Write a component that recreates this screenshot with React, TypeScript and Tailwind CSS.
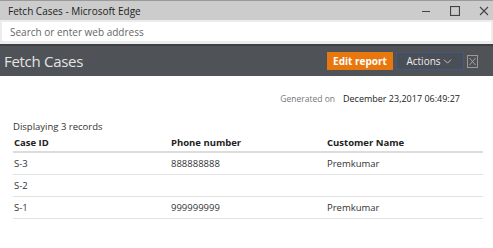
import { ChevronDown } from "lucide-react";

type CaseRow = { id: string; phone: string; name: string };

const rows: CaseRow[] = [
  { id: "S-3", phone: "888888888", name: "Premkumar" },
  { id: "S-2", phone: "", name: "" },
  { id: "S-1", phone: "999999999", name: "Premkumar" },
];

function App() {
  return (
    <div className="w-[493px] h-[248px] overflow-hidden bg-white font-['Open_Sans',sans-serif]">
      {/* window title bar */}
      <div className="h-[20px] bg-[#cccccc] border-t border-[#9a9a9a] flex items-center justify-between pl-[8px] pr-[4px]">
        <span className="text-[10px] text-[#222] leading-none">Fetch Cases - Microsoft Edge</span>
        <div className="flex items-center gap-[19px] text-[#333]">
          <svg width="10" height="10" viewBox="0 0 10 10"><path d="M1 5.5h8" stroke="#444" strokeWidth="1" /></svg>
          <svg width="10" height="10" viewBox="0 0 10 10"><rect x="0.5" y="0.5" width="9" height="9" fill="none" stroke="#444" strokeWidth="1.2" /></svg>
          <svg width="10" height="10" viewBox="0 0 10 10"><path d="M1 1l8 8M9 1l-8 8" stroke="#444" strokeWidth="1.1" /></svg>
        </div>
      </div>

      {/* address bar */}
      <div className="h-[26px] bg-[#ececec] px-[2px] pt-[2px] pb-[3px] border-b-2 border-[#3e4044]">
        <div className="h-full bg-white flex items-center px-[8px] pt-[2px]">
          <span className="text-[10px] text-[#666]">Search or enter web address</span>
        </div>
      </div>

      {/* app header */}
      <div className="h-[30px] bg-[#4f5256] flex items-center justify-between pl-[4px] pr-[15px]">
        <span className="text-[15px] tracking-[-0.3px] text-[#e4e4e4] leading-none">Fetch Cases</span>
        <div className="flex items-center">
          <button className="h-[18px] w-[66px] bg-[#e8780e] text-white text-[10px] font-bold">Edit report</button>
          <button className="ml-[3px] h-[18px] w-[68px] bg-[#4a4e56] border border-[#42587c] text-[#eee] text-[10px] flex items-center justify-center">
            Actions<ChevronDown size={13} strokeWidth={1.3} />
          </button>
          <div className="ml-[3px] w-[11px] h-[13px] border border-[#9a9a9a] flex items-center justify-center">
            <svg width="7" height="9" viewBox="0 0 7 9"><path d="M0.5 1l6 7M6.5 1l-6 7" stroke="#aaa" strokeWidth="0.9" /></svg>
          </div>
        </div>
      </div>

      {/* generated on */}
      <div className="flex justify-end items-baseline pr-[33px] pt-[16px] h-[43px]">
        <span className="text-[8.5px] text-[#777] mr-[8px]">Generated on</span>
        <span className="text-[9px] text-[#222]">December 23,2017 06:49:27</span>
      </div>

      {/* records table */}
      <div className="px-[13px] pr-[10px] pt-[1px]">
        <div className="text-[9.5px] text-[#333] leading-[13px] mb-[3px]">Displaying 3 records</div>
        <table className="w-full text-[9.5px] text-[#333] border-collapse">
          <thead>
            <tr className="border-b-2 border-[#dcdcdc]">
              <th className="text-left font-bold text-[#222] h-[16px] pl-[1px] w-[158px]">Case ID</th>
              <th className="text-left font-bold text-[#222] w-[156px]">Phone number</th>
              <th className="text-left font-bold text-[#222]">Customer Name</th>
            </tr>
          </thead>
          <tbody>
            {rows.map(r => (
              <tr key={r.id} className="border-b border-[#e2e2e2] h-[22px]">
                <td className="pl-[1px] pt-[2px]">{r.id}</td>
                <td className="pt-[2px]">{r.phone}</td>
                <td className="pt-[2px]">{r.name}</td>
              </tr>
            ))}
          </tbody>
        </table>
      </div>
    </div>
  );
}

export default App;
